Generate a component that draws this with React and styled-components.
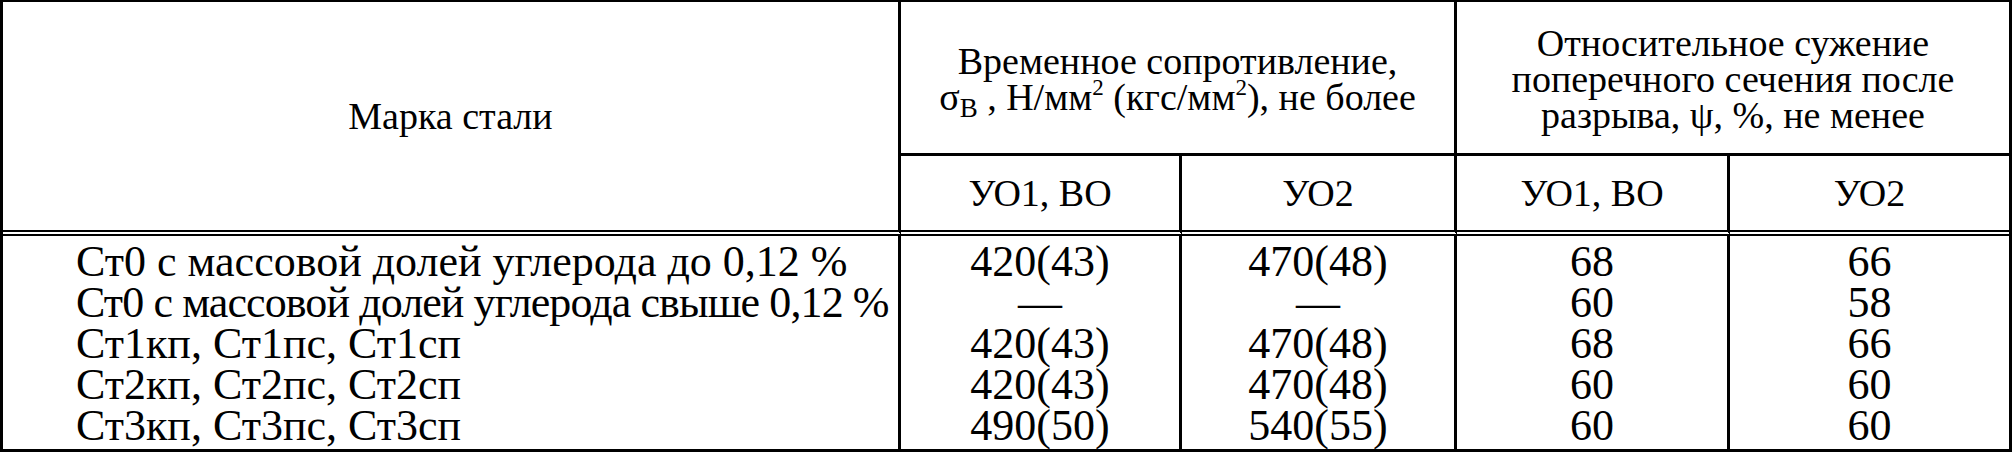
import React from 'react'
import styled, { createGlobalStyle } from 'styled-components'

const GlobalStyle = createGlobalStyle`
    html, body {
        margin: 0;
        padding: 0;
        background: #fff;
    }
`;

const Table = styled.div`
    box-sizing: border-box;
    width: 2012px;
    height: 452px;
    display: grid;
    grid-template-columns: 898px 281px 275px 273px 1fr;
    grid-template-rows: 154px 80px 1fr;
    border: 3px solid #000;
    border-top-width: 2px;
    font-family: "Liberation Serif", serif;
    color: #000;
    font-size: 38px;
    line-height: 36px;
`;

const HeadCell = styled.div`
    box-sizing: border-box;
    display: flex;
    align-items: center;
    justify-content: center;
    text-align: center;
    padding-top: ${p => (p.$split ? '2px' : '0')};
    grid-column: ${p => p.$col};
    grid-row: ${p => p.$row};
    border-right: ${p => (p.$last ? 'none' : '3px solid #000')};
    border-bottom: ${p => (p.$split ? '3px solid #000' : '6px double #000')};
`;

const Body = styled.div`
    box-sizing: border-box;
    display: flex;
    flex-direction: column;
    padding-top: 5px;
    grid-column: ${p => p.$col};
    grid-row: 3;
    border-right: ${p => (p.$last ? 'none' : '3px solid #000')};
    text-align: ${p => (p.$left ? 'left' : 'center')};
    padding-left: ${p => (p.$left ? '73px' : '0')};
    font-size: 44px;
`;

const Line = styled.div`
    height: 41px;
    line-height: 41px;
    white-space: nowrap;
    letter-spacing: ${p => (p.$tight ? '-0.9px' : '0')};
`;

const Sub = styled.sub`
    font-size: 27px;
    vertical-align: -7px;
    line-height: 0;
`;

const Sup = styled.sup`
    font-size: 23px;
    vertical-align: 15px;
    line-height: 0;
`;

const rows = [
    ['Ст0 с массовой долей углерода до 0,12 %', '420(43)', '470(48)', '68', '66'],
    ['Ст0 с массовой долей углерода свыше 0,12 %', '—', '—', '60', '58'],
    ['Ст1кп, Ст1пс, Ст1сп', '420(43)', '470(48)', '68', '66'],
    ['Ст2кп, Ст2пс, Ст2сп', '420(43)', '470(48)', '60', '60'],
    ['Ст3кп, Ст3пс, Ст3сп', '490(50)', '540(55)', '60', '60'],
]

const App = () => {
  return (
    <>
        <GlobalStyle/>
        <Table>
            <HeadCell $col='1' $row='1 / span 2'>Марка стали</HeadCell>
            <HeadCell $col='2 / span 2' $row='1' $split>
                <div>
                    Временное сопротивление,<br/>
                    σ<Sub>В</Sub> , Н/мм<Sup>2</Sup> (кгс/мм<Sup>2</Sup>), не более
                </div>
            </HeadCell>
            <HeadCell $col='4 / span 2' $row='1' $split $last>
                <div>
                    Относительное сужение<br/>
                    поперечного сечения после<br/>
                    разрыва, ψ, %, не менее
                </div>
            </HeadCell>
            <HeadCell $col='2' $row='2'>УО1, ВО</HeadCell>
            <HeadCell $col='3' $row='2'>УО2</HeadCell>
            <HeadCell $col='4' $row='2'>УО1, ВО</HeadCell>
            <HeadCell $col='5' $row='2' $last>УО2</HeadCell>
            {[0, 1, 2, 3, 4].map(c => (
                <Body key={c} $col={c + 1} $left={c === 0} $last={c === 4}>
                    {rows.map((r, i) => (
                        <Line key={i} $tight={c === 0 && i === 1}>{r[c]}</Line>
                    ))}
                </Body>
            ))}
        </Table>
    </>
  )
}

export default App
